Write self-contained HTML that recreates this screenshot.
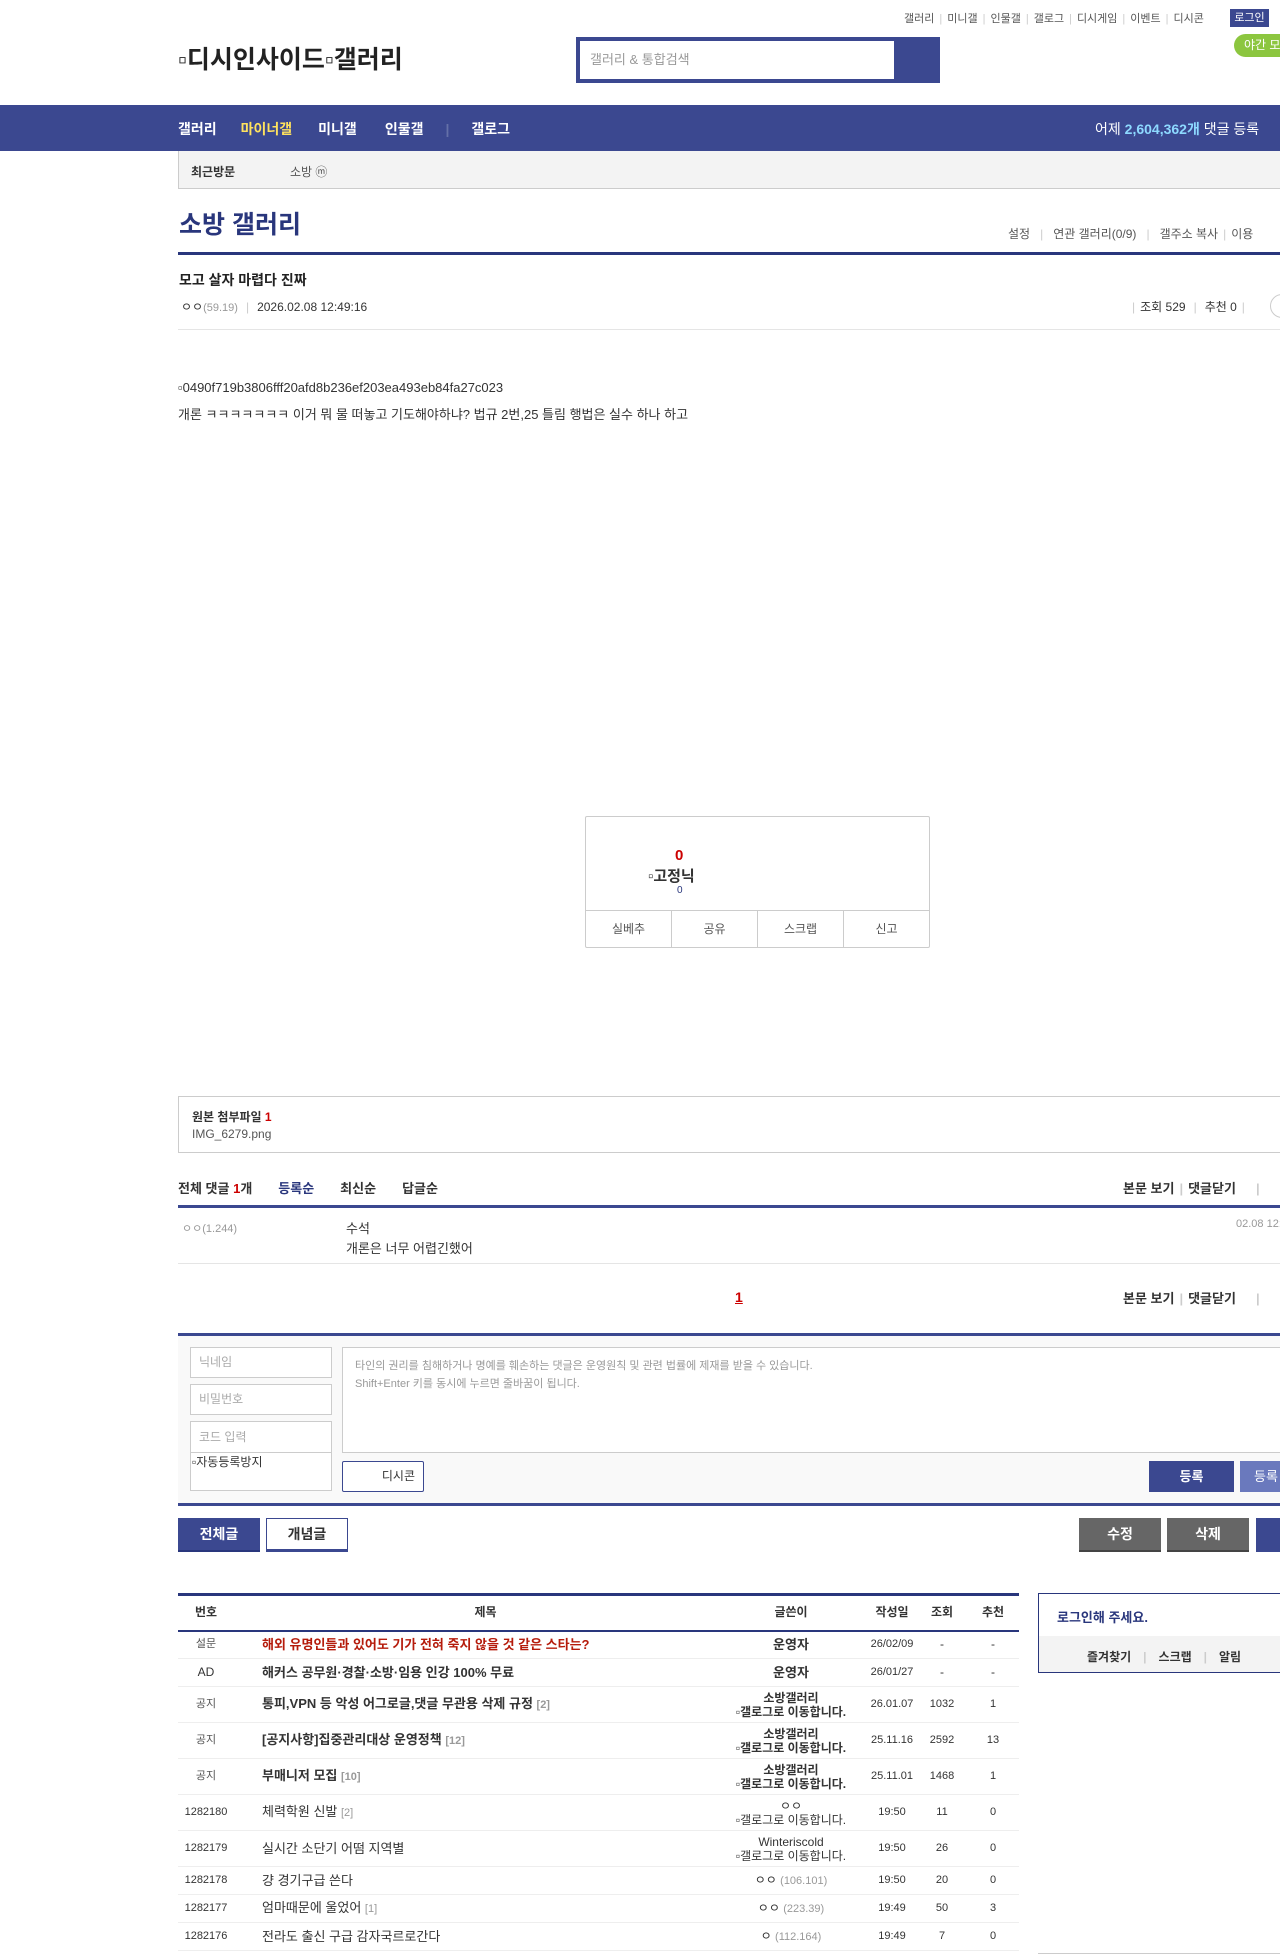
<!DOCTYPE html>
<html><head><meta charset="utf-8"><style>
*{margin:0;padding:0;box-sizing:border-box}
body{width:1280px;height:1959px;overflow:hidden;position:relative;background:#fff;font-family:"Liberation Sans","Noto Sans CJK KR",sans-serif;color:#333;font-size:13px}
.a{position:absolute;white-space:nowrap}
.navy{background:#3b4890}
.hl{position:absolute;height:1px;background:#e5e5e5}
.sep{color:#ccc;margin:0 5px}
table{border-collapse:collapse;table-layout:fixed}
.lst td{height:36px;border-bottom:1px solid #eee;font-size:12px;text-align:center;padding:0;line-height:15px;white-space:nowrap;overflow:hidden}
.lst td:first-child{padding-right:22px}
.lst tr.s td{height:28px}
.lst td.t{text-align:left;font-size:13px;padding-left:6px}
.rp{color:#999;font-size:11px}
.gl{font-size:12px}
.gl b,.gl span{display:block;line-height:14px}
</style></head><body>
<div class="a" style="left:904px;top:10px;font-size:11px;color:#555">갤러리<span class="sep">|</span>미니갤<span class="sep">|</span>인물갤<span class="sep">|</span>갤로그<span class="sep">|</span>디시게임<span class="sep">|</span>이벤트<span class="sep">|</span>디시콘</div>
<div class="a navy" style="left:1230px;top:9px;width:39px;height:18px;color:#fff;font-size:11px;text-align:center;line-height:18px">로그인</div>
<div class="a" style="left:1234px;top:34px;width:60px;height:23px;border-radius:12px;background:#8cc63f;color:#fff;font-size:12px;line-height:23px;padding-left:10px">야간 모드</div>
<div class="a" style="left:178px;top:40px;font-size:25px;font-weight:bold;color:#222">▫디시인사이드▫갤러리</div>
<div class="a navy" style="left:576px;top:37px;width:364px;height:46px"></div>
<div class="a" style="left:580px;top:41px;width:314px;height:38px;background:#fff;color:#999;font-size:13px;line-height:38px;padding-left:10px">갤러리 &amp; 통합검색</div>
<div class="a navy" style="left:0;top:105px;width:1280px;height:46px"></div>
<div class="a" style="left:178px;top:119px;font-size:14px;font-weight:bold;color:#fff">갤러리<span style="color:#ffe25e;margin-left:24px">마이너갤</span><span style="margin-left:26px">미니갤</span><span style="margin-left:28px">인물갤</span><span style="color:#6470a8;margin:0 22px">|</span>갤로그</div>
<div class="a" style="left:1095px;top:119px;font-size:14px;color:#fff">어제 <b style="color:#8dd9ff">2,604,362개</b> 댓글 등록</div>
<div class="a" style="left:178px;top:151px;width:1102px;height:38px;background:#f3f3f3;border-left:1px solid #ccc;border-bottom:1px solid #ccc"></div>
<div class="a" style="left:191px;top:163px;font-size:12px;font-weight:bold;color:#333">최근방문</div>
<div class="a" style="left:290px;top:163px;font-size:12px;color:#555">소방 ⓜ</div>
<div class="a" style="left:179px;top:205px;font-size:25px;font-weight:bold;color:#29367c">소방 갤러리</div>
<div class="a" style="left:1008px;top:225px;font-size:12px;color:#555">설정<span class="sep" style="margin:0 10px">|</span>연관 갤러리(0/9)<span class="sep" style="margin:0 10px">|</span>갤주소 복사<span class="sep">|</span>이용</div>
<div class="a" style="left:178px;top:252px;width:1102px;height:3px;background:#29367c"></div>
<div class="a" style="left:179px;top:270px;font-size:14px;font-weight:bold;color:#222">모고 살자 마렵다 진짜</div>
<div class="a" style="left:181px;top:298px;font-size:12px;color:#333">ㅇㅇ<span style="color:#999;font-size:11px">(59.19)</span><span class="sep" style="margin:0 8px">|</span>2026.02.08 12:49:16</div>
<div class="a" style="left:1127px;top:298px;font-size:12px;color:#333"><span class="sep">|</span>조회 529<span class="sep" style="margin:0 8px">|</span>추천 0<span class="sep">|</span></div>
<div class="a" style="left:1270px;top:294px;width:24px;height:24px;border:1px solid #ccc;border-radius:12px"></div>
<div class="hl" style="left:178px;top:329px;width:1102px"></div>
<div class="a" style="left:178px;top:380px;font-size:13px;color:#333">▫0490f719b3806fff20afd8b236ef203ea493eb84fa27c023</div>
<div class="a" style="left:178px;top:404px;font-size:13px;color:#333">개론 ㅋㅋㅋㅋㅋㅋㅋ 이거 뭐 물 떠놓고 기도해야하냐? 법규 2번,25 틀림 행법은 실수 하나 하고</div>
<div class="a" style="left:585px;top:816px;width:345px;height:132px;border:1px solid #ccc;border-radius:2px"></div>
<div class="a" style="left:675px;top:847px;font-size:15px;font-weight:bold;color:#c00">0</div>
<div class="a" style="left:648px;top:865px;font-size:15px;font-weight:bold;color:#333">▫고정닉</div>
<div class="a" style="left:677px;top:885px;font-size:10px;color:#29367c">0</div>
<div class="a" style="left:586px;top:910px;width:343px;height:37px;border-top:1px solid #ccc;display:flex;font-size:12px;color:#555">
<div style="flex:1;border-right:1px solid #ccc;text-align:center;line-height:36px">실베추</div><div style="flex:1;border-right:1px solid #ccc;text-align:center;line-height:36px">공유</div><div style="flex:1;border-right:1px solid #ccc;text-align:center;line-height:36px">스크랩</div><div style="flex:1;text-align:center;line-height:36px">신고</div></div>
<div class="a" style="left:178px;top:1096px;width:1110px;height:57px;border:1px solid #ccc"></div>
<div class="a" style="left:192px;top:1108px;font-size:12px;font-weight:bold;color:#333">원본 첨부파일 <span style="color:#c00">1</span></div>
<div class="a" style="left:192px;top:1127px;font-size:12px;color:#555">IMG_6279.png</div>
<div class="a" style="left:178px;top:1178px;font-size:13px;font-weight:bold;color:#333">전체 댓글 <span style="color:#c00">1</span>개<span style="color:#29367c;margin-left:26px">등록순</span><span style="margin-left:26px">최신순</span><span style="margin-left:26px">답글순</span></div>
<div class="a" style="left:1123px;top:1178px;font-size:13px;font-weight:bold;color:#333">본문 보기<span class="sep">|</span>댓글닫기<span class="sep" style="margin-left:20px">|</span></div>
<div class="a" style="left:178px;top:1205px;width:1102px;height:3px;background:#3b4890"></div>
<div class="a" style="left:182px;top:1220px;font-size:11px;color:#999">ㅇㅇ(1.244)</div>
<div class="a" style="left:346px;top:1218px;font-size:13px;color:#333">수석</div>
<div class="a" style="left:346px;top:1238px;font-size:13px;color:#333">개론은 너무 어렵긴했어</div>
<div class="a" style="left:1236px;top:1218px;font-size:11px;color:#999">02.08 12:5</div>
<div class="hl" style="left:178px;top:1263px;width:1102px"></div>
<div class="a" style="left:735px;top:1289px;font-size:14px;font-weight:bold;color:#c00;text-decoration:underline">1</div>
<div class="a" style="left:1123px;top:1288px;font-size:13px;font-weight:bold;color:#333">본문 보기<span class="sep">|</span>댓글닫기<span class="sep" style="margin-left:20px">|</span></div>
<div class="a" style="left:178px;top:1333px;width:1102px;height:173px;background:#f9f9f9;border-top:3px solid #3b4890;border-bottom:3px solid #3b4890"></div>
<div class="a" style="left:190px;top:1347px;width:142px;height:31px;border:1px solid #ccc;background:#fff;color:#aaa;font-size:12px;line-height:29px;padding-left:8px">닉네임</div>
<div class="a" style="left:190px;top:1384px;width:142px;height:31px;border:1px solid #ccc;background:#fff;color:#aaa;font-size:12px;line-height:29px;padding-left:8px">비밀번호</div>
<div class="a" style="left:190px;top:1421px;width:142px;height:70px;border:1px solid #ccc;background:#fff;color:#aaa;font-size:12px;padding:6px 8px">코드 입력</div>
<div class="a" style="left:190px;top:1452px;width:142px;height:1px;background:#ccc"></div>
<div class="a" style="left:192px;top:1453px;font-size:12px;color:#333">▫자동등록방지</div>
<div class="a" style="left:342px;top:1347px;width:950px;height:106px;border:1px solid #ccc;background:#fff;color:#999;font-size:11px;line-height:18px;padding:9px 12px">타인의 권리를 침해하거나 명예를 훼손하는 댓글은 운영원칙 및 관련 법률에 제재를 받을 수 있습니다.<br>Shift+Enter 키를 동시에 누르면 줄바꿈이 됩니다.</div>
<div class="a" style="left:342px;top:1461px;width:82px;height:31px;border:1px solid #3b4890;border-radius:2px;background:#fff;font-size:12px;color:#333;line-height:29px;text-align:right;padding-right:8px">디시콘</div>
<div class="a navy" style="left:1149px;top:1461px;width:85px;height:31px;color:#fff;font-size:13px;font-weight:bold;text-align:center;line-height:31px">등록</div>
<div class="a" style="left:1240px;top:1461px;width:60px;height:31px;background:#6a79bd;color:#fff;font-size:13px;line-height:31px;padding-left:14px">등록</div>
<div class="a navy" style="left:178px;top:1518px;width:82px;height:34px;color:#fff;font-size:14px;font-weight:bold;text-align:center;line-height:32px;border-bottom:2px solid #29367c">전체글</div>
<div class="a" style="left:266px;top:1518px;width:82px;height:34px;background:#fff;border:1px solid #3b4890;border-bottom:3px solid #3b4890;color:#333;font-size:14px;font-weight:bold;text-align:center;line-height:30px">개념글</div>
<div class="a" style="left:1079px;top:1518px;width:82px;height:34px;background:#666;color:#fff;font-size:14px;font-weight:bold;text-align:center;line-height:32px;border-bottom:2px solid #444">수정</div>
<div class="a" style="left:1167px;top:1518px;width:82px;height:34px;background:#666;color:#fff;font-size:14px;font-weight:bold;text-align:center;line-height:32px;border-bottom:2px solid #444">삭제</div>
<div class="a navy" style="left:1256px;top:1518px;width:82px;height:34px"></div>
<div class="a" style="left:178px;top:1593px;width:841px">
<table class="lst" style="width:841px;border-top:3px solid #29367c">
<colgroup><col style="width:78px"><col style="width:459px"><col style="width:152px"><col style="width:50px"><col style="width:50px"><col style="width:52px"></colgroup>
<tr><td style="height:35px;font-weight:bold;border-bottom:2px solid #29367c">번호</td><td style="border-bottom:2px solid #29367c;font-weight:bold">제목</td><td style="border-bottom:2px solid #29367c;font-weight:bold">글쓴이</td><td style="border-bottom:2px solid #29367c;font-weight:bold">작성일</td><td style="border-bottom:2px solid #29367c;font-weight:bold">조회</td><td style="border-bottom:2px solid #29367c;font-weight:bold">추천</td></tr>
<tr class="s"><td style="font-size:11px;color:#555">설문</td><td class="t" style="color:#b51b0b;font-weight:bold">해외 유명인들과 있어도 기가 전혀 죽지 않을 것 같은 스타는?</td><td style="font-weight:bold;font-size:13px">운영자</td><td style="font-size:11px">26/02/09</td><td>-</td><td>-</td></tr>
<tr class="s"><td>AD</td><td class="t" style="font-weight:bold">해커스 공무원·경찰·소방·임용 인강 100% 무료</td><td style="font-weight:bold;font-size:13px">운영자</td><td style="font-size:11px">26/01/27</td><td>-</td><td>-</td></tr>
<tr><td style="font-size:11px;color:#555">공지</td><td class="t" style="font-weight:bold">통피,VPN 등 악성 어그로글,댓글 무관용 삭제 규정 <span class="rp">[2]</span></td><td class="gl"><b>소방갤러리</b><b>▫갤로그로 이동합니다.</b></td><td style="font-size:11px">26.01.07</td><td style="font-size:11px">1032</td><td style="font-size:11px">1</td></tr>
<tr><td style="font-size:11px;color:#555">공지</td><td class="t" style="font-weight:bold">[공지사항]집중관리대상 운영정책 <span class="rp">[12]</span></td><td class="gl"><b>소방갤러리</b><b>▫갤로그로 이동합니다.</b></td><td style="font-size:11px">25.11.16</td><td style="font-size:11px">2592</td><td style="font-size:11px">13</td></tr>
<tr><td style="font-size:11px;color:#555">공지</td><td class="t" style="font-weight:bold">부매니저 모집 <span class="rp">[10]</span></td><td class="gl"><b>소방갤러리</b><b>▫갤로그로 이동합니다.</b></td><td style="font-size:11px">25.11.01</td><td style="font-size:11px">1468</td><td style="font-size:11px">1</td></tr>
<tr><td style="font-size:11px">1282180</td><td class="t">체력학원 신발 <span class="rp">[2]</span></td><td class="gl"><span>ㅇㅇ</span><span>▫갤로그로 이동합니다.</span></td><td style="font-size:11px">19:50</td><td style="font-size:11px">11</td><td style="font-size:11px">0</td></tr>
<tr><td style="font-size:11px">1282179</td><td class="t">실시간 소단기 어떰 지역별</td><td class="gl"><span>Winteriscold</span><span>▫갤로그로 이동합니다.</span></td><td style="font-size:11px">19:50</td><td style="font-size:11px">26</td><td style="font-size:11px">0</td></tr>
<tr class="s"><td style="font-size:11px">1282178</td><td class="t">걍 경기구급 쓴다</td><td>ㅇㅇ <span class="rp">(106.101)</span></td><td style="font-size:11px">19:50</td><td style="font-size:11px">20</td><td style="font-size:11px">0</td></tr>
<tr class="s"><td style="font-size:11px">1282177</td><td class="t">엄마때문에 울었어 <span class="rp">[1]</span></td><td>ㅇㅇ <span class="rp">(223.39)</span></td><td style="font-size:11px">19:49</td><td style="font-size:11px">50</td><td style="font-size:11px">3</td></tr>
<tr class="s"><td style="font-size:11px">1282176</td><td class="t">전라도 출신 구급 감자국르로간다</td><td>ㅇ <span class="rp">(112.164)</span></td><td style="font-size:11px">19:49</td><td style="font-size:11px">7</td><td style="font-size:11px">0</td></tr>
</table></div>
<div class="a" style="left:1038px;top:1593px;width:260px;height:80px;border:1px solid #29367c"></div>
<div class="a" style="left:1057px;top:1607px;font-size:13px;font-weight:bold;color:#29367c">로그인해 주세요.</div>
<div class="a" style="left:1039px;top:1636px;width:250px;height:36px;background:#f3f3f3"></div>
<div class="a" style="left:1087px;top:1648px;font-size:12px;font-weight:bold;color:#333">즐겨찾기<span class="sep" style="margin:0 12px">|</span>스크랩<span class="sep" style="margin:0 12px">|</span>알림</div>
<div class="a" style="left:1038px;top:1953px;width:250px;height:1px;background:#ccc"></div>
</body></html>
